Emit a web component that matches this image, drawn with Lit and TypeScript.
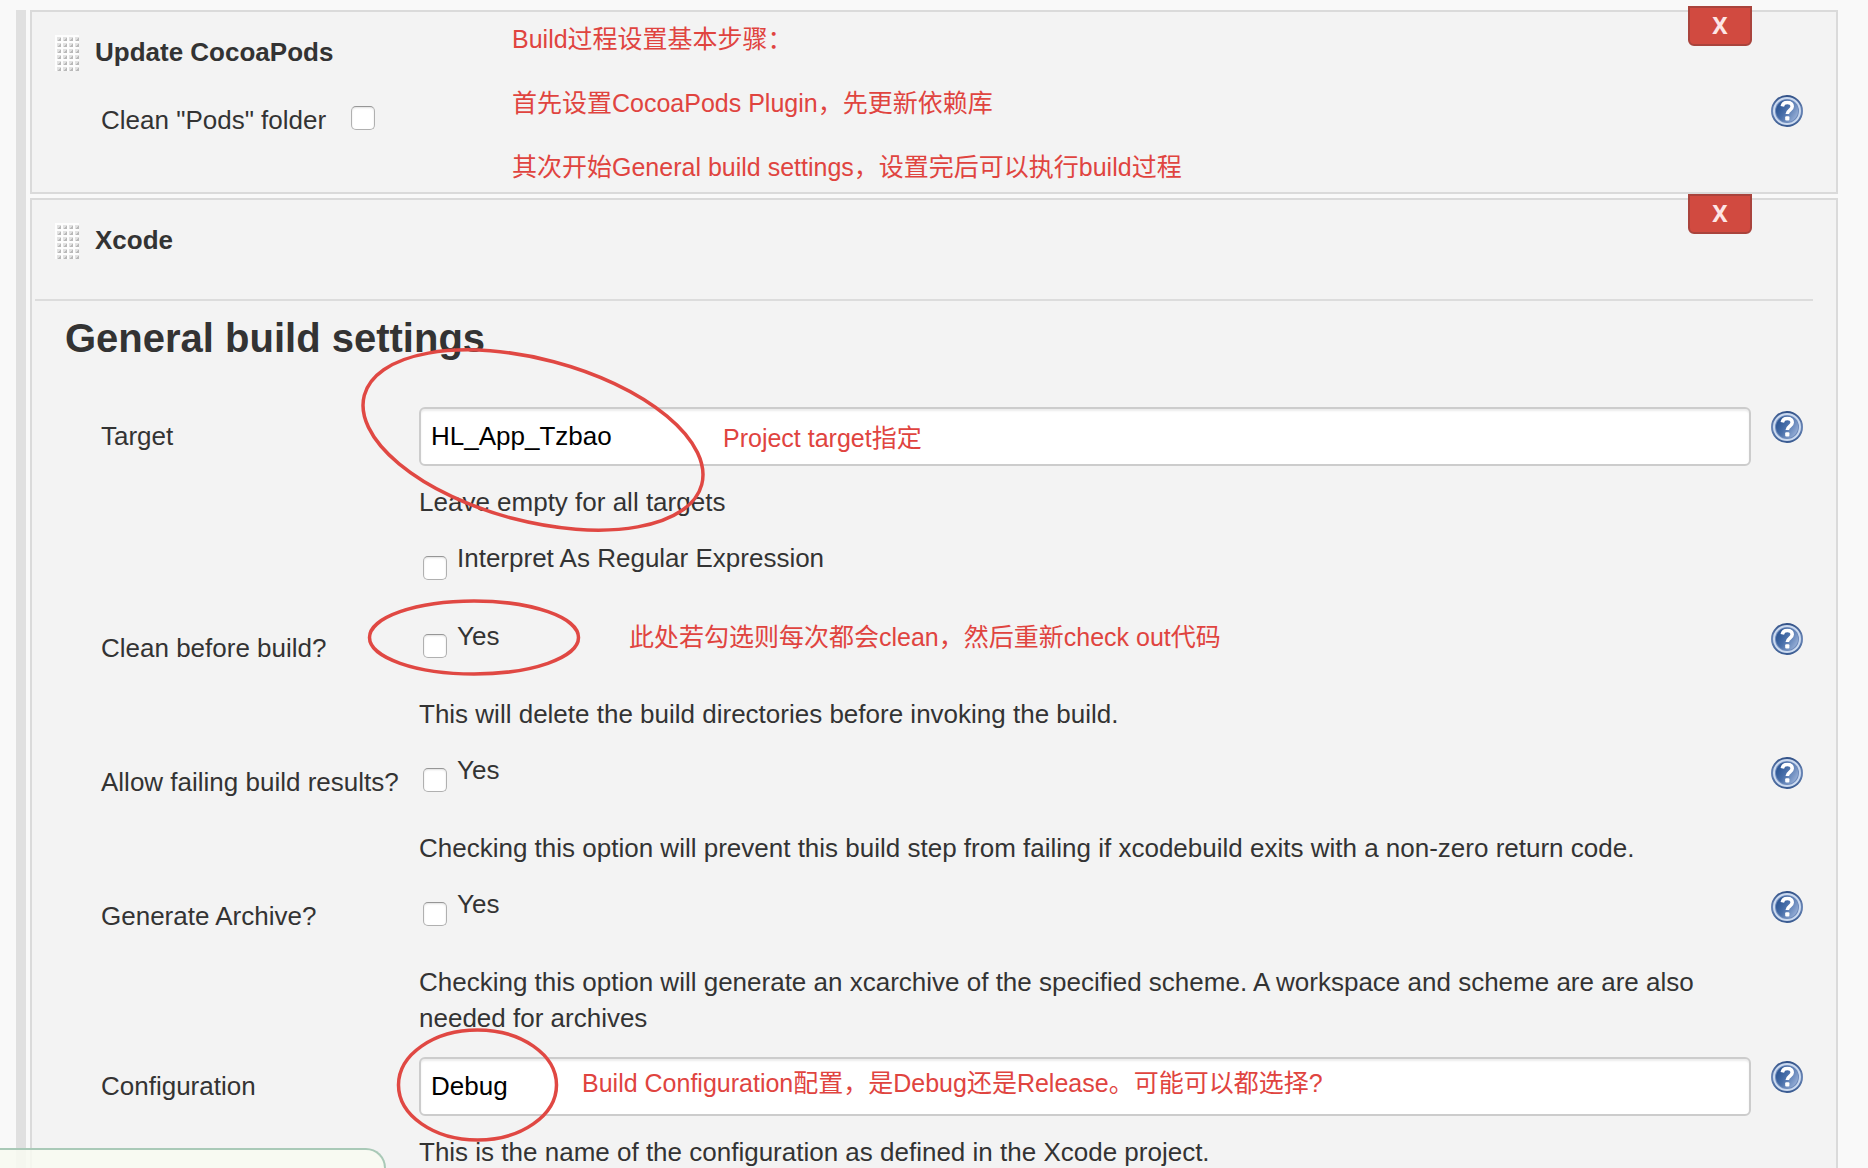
import { LitElement, html, css, svg, nothing } from "lit";
import { customElement, property } from "lit/decorators.js";

interface Ring {
  cx: number;
  cy: number;
  rx: number;
  ry: number;
  angle: number;
}

const RINGS: Record<string, Ring> = {
  target: { cx: 114, cy: 33, rx: 174.5, ry: 81, angle: 14.8 },
  clean: { cx: 55, cy: 18.5, rx: 104.5, ry: 36.5, angle: 0 },
  config: { cx: 58.5, cy: 28, rx: 79, ry: 55, angle: 0 },
};

/** Round blue help button. */
@customElement("help-button")
export class HelpButton extends LitElement {
  static styles = css`
    :host {
      display: block;
    }
    .help {
      display: block;
      width: 32px;
      height: 32px;
      padding: 0;
      border: 0;
      background: none;
      cursor: pointer;
    }
    .icon {
      display: block;
      width: 32px;
      height: 32px;
    }
  `;

  @property() topic = "";

  render() {
    return html`
      <button class="help" type="button" aria-label="Help: ${this.topic}">
        <svg class="icon" viewBox="0 0 32 32" aria-hidden="true">
          <defs>
            <linearGradient id="disc" x1="0" y1="0.2" x2="1" y2="0.8">
              <stop offset="0" stop-color="#26508f" />
              <stop offset="0.45" stop-color="#4a70aa" />
              <stop offset="1" stop-color="#9db4da" />
            </linearGradient>
            <linearGradient id="rim" x1="0" y1="0" x2="0" y2="1">
              <stop offset="0" stop-color="#2f4f86" />
              <stop offset="0.5" stop-color="#6a86b6" />
              <stop offset="1" stop-color="#36588f" />
            </linearGradient>
          </defs>
          <circle cx="16" cy="16" r="16" fill="url(#rim)" />
          <circle cx="16" cy="16" r="14" fill="#cbdaf0" />
          <circle cx="16" cy="16" r="12" fill="#6d8abb" />
          <circle cx="16" cy="16" r="11" fill="url(#disc)" />
          <path
            d="M11.300 11.400C11.800 8.600 13.800 7.500 16.200 7.500c3 0 5 1.500 5 4 0 3.600-4.700 3.500-4.900 7.500"
            fill="none"
            stroke="#fff"
            stroke-width="3.6"
          />
          <rect x="14.200" y="21.200" width="4.200" height="4.200" rx="1" fill="#fff" />
        </svg>
      </button>
    `;
  }
}

@customElement("app-root")
export class AppRoot extends LitElement {
  static styles = css`
    :host {
      display: block;
      height: 100vh;
      overflow: hidden;
      background: #f9f9f9;
      color: #333;
      font: 26px/36px "Liberation Sans", "Noto Sans CJK SC", sans-serif;
    }
    * {
      box-sizing: border-box;
    }
    .page {
      padding: 10px 30px 0 16px;
    }
    .steps {
      display: flex;
      flex-direction: column;
      gap: 4px;
      padding-left: 4px;
      border-left: 10px solid #e0e0e0;
    }
    .step {
      position: relative;
      border: 2px solid #dadada;
      background: #f3f3f3;
    }
    .head {
      display: flex;
      align-items: flex-start;
      gap: 16px;
      padding: 22px 0 0 23px;
    }
    .grip {
      display: block;
      width: 24px;
      height: 36px;
      margin-top: 1px;
    }
    .title {
      margin: 0;
      font-size: 26px;
      line-height: 36px;
      font-weight: bold;
    }
    .remove {
      position: absolute;
      top: -6px;
      right: 84px;
      width: 64px;
      height: 40px;
      padding: 0 0 2px;
      border: 2px solid #a9433c;
      border-radius: 0 0 6px 6px;
      background: #d14a40;
      color: #fde6e6;
      font: bold 23px/32px "Noto Sans", "Open Sans", sans-serif;
      cursor: pointer;
    }
    .rule {
      height: 2px;
      margin: 40px 23px 0 3px;
      border: 0;
      background: #dcdcdc;
    }
    .section {
      margin: 14px 0 46px 33px;
      font-size: 40px;
      line-height: 46px;
      font-weight: bold;
    }
    .row {
      display: grid;
      grid-template-columns: 318px 1fr 32px;
      padding: 0 33px 0 69px;
    }
    .row.compact {
      grid-template-columns: auto 1fr 32px;
      column-gap: 21px;
      padding-top: 20px;
      padding-bottom: 24px;
    }
    .name {
      padding-top: 11px;
      white-space: nowrap;
    }
    .field {
      position: relative;
      margin-right: 20px;
    }
    .check {
      display: flex;
      align-items: flex-start;
      gap: 10px;
      height: 77px;
      padding-left: 4px;
      line-height: 34px;
    }
    .desc + .check {
      height: 78px;
    }
    .box {
      appearance: none;
      width: 24px;
      height: 24px;
      margin: 15px 0 0;
      border: 1px solid #b0b0b0;
      border-top-color: #969696;
      border-radius: 5px;
      background: #fff;
      box-shadow: inset 0 1px 2px #e0e0e0;
    }
    .box:checked {
      background: #4a70aa;
    }
    .text {
      display: block;
      width: 100%;
      height: 59px;
      margin: 0 0 18px;
      padding: 0 10px;
      border: 2px solid #ccc;
      border-radius: 6px;
      background: #fff;
      box-shadow: inset 0 2px 2px #ececec;
      color: #000;
      font: inherit;
    }
    .desc {
      margin: 0 0 21px;
    }
    .help {
      padding-top: 4px;
    }
    .note {
      position: absolute;
      margin: 0;
      color: #e0443f;
      font-size: 25px;
      line-height: 36px;
      white-space: nowrap;
      pointer-events: none;
    }
    .note.intro {
      top: -5px;
      left: 480px;
      line-height: 64px;
    }
    .note.target {
      top: 13px;
      left: 304px;
    }
    .note.clean {
      top: 0;
      left: 210px;
    }
    .note.config {
      top: 8px;
      left: 163px;
    }
    .ring {
      position: absolute;
      top: 0;
      left: 0;
      width: 1px;
      height: 1px;
      overflow: visible;
      pointer-events: none;
      z-index: 1;
    }
    .status {
      position: fixed;
      bottom: 0;
      left: 0;
      width: 386px;
      height: 20px;
      border: 2px solid #a9c9b7;
      border-width: 2px 2px 0 0;
      border-top-right-radius: 20px;
      background: rgba(248, 250, 241, 0.85);
    }
  `;

  private grip() {
    const cells = [];
    for (let r = 0; r < 6; r++) {
      for (let c = 0; c < 4; c++) {
        const x = c * 6 + 2;
        const y = r * 6 + 1;
        cells.push(svg`
          <path d="M${x} ${y + 5}L${x + 4} ${y + 1}V${y + 5}Z" fill="#b9b9b9" />
          <path d="M${x} ${y + 5}V${y + 1}H${x + 4}Z" fill="#e2e2e2" />
        `);
      }
    }
    return html`<svg class="grip" viewBox="0 0 24 36" aria-hidden="true">
      <rect width="24" height="36" fill="#fdfdfd" />
      ${cells}
    </svg>`;
  }

  private head(title: string) {
    return html`
      <div class="head">
        ${this.grip()}
        <h2 class="title">${title}</h2>
      </div>
      <button class="remove" type="button" aria-label="Remove ${title}">X</button>
    `;
  }

  private ring(key: string) {
    const r = RINGS[key];
    return html`<svg class="ring" aria-hidden="true">
      <ellipse
        cx=${r.cx}
        cy=${r.cy}
        rx=${r.rx}
        ry=${r.ry}
        transform="rotate(${r.angle} ${r.cx} ${r.cy})"
        fill="none"
        stroke="#e04843"
        stroke-width="3.5"
      />
    </svg>`;
  }

  private annotation(key: string, note: string) {
    return html`<p class="note ${key}">${note}</p>
      ${this.ring(key)}`;
  }

  private check(id: string, label: string) {
    return html`<div class="check">
      <input class="box" type="checkbox" id=${id} />
      <label for=${id}>${label}</label>
    </div>`;
  }

  private checkRow(id: string, name: string, desc: string, extra: unknown = nothing) {
    return html`<div class="row" role="group" aria-labelledby="${id}-name">
      <div class="name" id="${id}-name">${name}</div>
      <div class="field">
        ${this.check(id, "Yes")}
        <p class="desc">${desc}</p>
        ${extra}
      </div>
      <help-button class="help" topic=${name}></help-button>
    </div>`;
  }

  private textRow(id: string, name: string, value: string, desc: string, extra: unknown) {
    return html`<div class="row">
      <label class="name" for=${id}>${name}</label>
      <div class="field">
        <input class="text" type="text" id=${id} .value=${value} />
        <p class="desc">${desc}</p>
        ${extra}
      </div>
      <help-button class="help" topic=${name}></help-button>
    </div>`;
  }

  render() {
    return html`
      <main class="page">
        <div class="steps">
          <section class="step">
            ${this.head("Update CocoaPods")}
            <div class="row compact">
              <label class="name" for="pods">Clean "Pods" folder</label>
              <div class="field">
                <div class="check"><input class="box" type="checkbox" id="pods" /></div>
              </div>
              <help-button class="help" topic="Clean Pods folder"></help-button>
            </div>
            <div class="note intro">
              <div>Build过程设置基本步骤：</div>
              <div>首先设置CocoaPods Plugin，先更新依赖库</div>
              <div>其次开始General build settings，设置完后可以执行build过程</div>
            </div>
          </section>

          <section class="step">
            ${this.head("Xcode")}
            <hr class="rule" />
            <h1 class="section">General build settings</h1>
            ${this.textRow(
              "target",
              "Target",
              "HL_App_Tzbao",
              "Leave empty for all targets",
              html`${this.check("regex", "Interpret As Regular Expression")}
              ${this.annotation("target", "Project target指定")}`
            )}
            ${this.checkRow(
              "clean",
              "Clean before build?",
              "This will delete the build directories before invoking the build.",
              this.annotation("clean", "此处若勾选则每次都会clean，然后重新check out代码")
            )}
            ${this.checkRow(
              "failing",
              "Allow failing build results?",
              "Checking this option will prevent this build step from failing if xcodebuild exits with a non-zero return code."
            )}
            ${this.checkRow(
              "archive",
              "Generate Archive?",
              "Checking this option will generate an xcarchive of the specified scheme. A workspace and scheme are are also needed for archives"
            )}
            ${this.textRow(
              "configuration",
              "Configuration",
              "Debug",
              "This is the name of the configuration as defined in the Xcode project.",
              this.annotation("config", "Build Configuration配置，是Debug还是Release。可能可以都选择?")
            )}
          </section>
        </div>
      </main>
      <div class="status" role="status"></div>
    `;
  }
}
